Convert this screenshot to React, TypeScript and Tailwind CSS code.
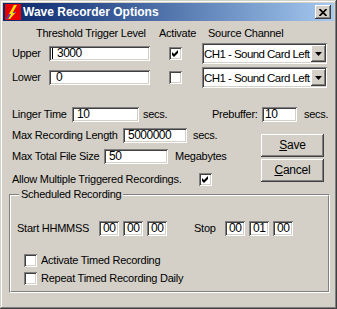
import React from "react";

const SUNKEN =
  "shadow-[inset_1px_1px_0_#808080,inset_-1px_-1px_0_#ffffff,inset_2px_2px_0_#404040,inset_-2px_-2px_0_#d4d0c8]";
const RAISED =
  "shadow-[inset_-1px_-1px_0_#404040,inset_1px_1px_0_#ffffff,inset_-2px_-2px_0_#808080,inset_2px_2px_0_#d4d0c8]";

function CheckBox({ checked }: { checked?: boolean }) {
  return (
    <div className={"w-[13px] h-[13px] shrink-0 bg-white flex items-center justify-center " + SUNKEN}>
      {checked && (
        <svg width="7" height="7" viewBox="0 0 7 7">
          <path d="M0 2 L2 4 L6 0 L6 3 L2 7 L0 5 Z" fill="#000" />
        </svg>
      )}
    </div>
  );
}

function TextBox({ value, w, pad, caret }: { value: string; w: string; pad?: string; caret?: boolean }) {
  return (
    <div
      className={
        "h-[15px] shrink-0 bg-white flex items-center text-[12px] tracking-[-0.5px] leading-[13px] overflow-hidden whitespace-nowrap " +
        w +
        " " +
        (pad ?? "pl-[5px]") +
        " " +
        SUNKEN
      }
    >
      {caret && <span className="w-[1px] h-[11px] bg-black mr-[4px] -ml-[2px] shrink-0" />}
      {value}
    </div>
  );
}

function Select({ text }: { text: string }) {
  return (
    <div className={"w-[125px] h-[21px] shrink-0 bg-white flex items-center pl-[2px] pr-[1px] " + SUNKEN}>
      <span className="flex-1 overflow-hidden whitespace-nowrap text-[11.5px] tracking-[-0.55px] leading-[14px]">
        {text}
      </span>
      <div className={"w-[15px] h-[17px] shrink-0 bg-[#d4d0c8] flex items-center justify-center " + RAISED}>
        <svg width="7" height="4" viewBox="0 0 7 4">
          <path d="M0 0 H7 L3.5 4 Z" fill="#000" />
        </svg>
      </div>
    </div>
  );
}

function Button({ children }: { children: React.ReactNode }) {
  return (
    <div
      className={
        "w-[63px] h-[23px] bg-[#d4d0c8] flex items-center justify-center text-[12px] tracking-[-0.2px] " + RAISED
      }
    >
      {children}
    </div>
  );
}

export default function App() {
  return (
    <div
      className={
        "w-[337px] h-[309px] bg-[#d4d0c8] p-[3px] flex flex-col font-['Liberation_Sans',Arial,sans-serif] text-[11px] tracking-[-0.25px] leading-[13px] text-black shadow-[inset_-1px_-1px_0_#404040,inset_1px_1px_0_#d4d0c8,inset_-2px_-2px_0_#808080,inset_2px_2px_0_#ffffff]"
      }
    >
      {/* Title bar */}
      <div className="h-[18px] shrink-0 flex items-center bg-linear-to-r from-[#0a246a] to-[#a6caf0] pl-[2px] pr-[3px]">
        <svg width="16" height="16" viewBox="0 0 16 16" className="shrink-0">
          <rect width="16" height="16" fill="#e80000" />
          <path d="M9 1 L12 1 L8 8 L11 8 L5 15 L3 15 L6 10 L4 10 Z" fill="#ffe400" />
          <path d="M4 10 L6 10 L3 15 L1 15 Z" fill="#5a3cc8" />
          <path d="M8 8 L11 8 L10 9 L7.5 9 Z" fill="#5a3cc8" />
        </svg>
        <span className="ml-[2px] text-white font-bold text-[12px] tracking-[0px] leading-[14px] whitespace-nowrap">
          Wave Recorder Options
        </span>
        <div className={"ml-auto w-[16px] h-[14px] bg-[#d4d0c8] flex items-center justify-center " + RAISED}>
          <svg width="8" height="7" viewBox="0 0 8 7">
            <path d="M0.5 0 L7.5 7 M7.5 0 L0.5 7" stroke="#000" strokeWidth="1.7" />
          </svg>
        </div>
      </div>

      {/* Header row */}
      <div className="h-[22px] pt-[2px] flex items-center whitespace-nowrap">
        <span className="ml-[33px] w-[123px]">Threshold Trigger Level</span>
        <span className="w-[49px]">Activate</span>
        <span>Source Channel</span>
      </div>

      {/* Upper */}
      <div className="h-[21px] flex items-center">
        <span className="ml-[9px] w-[37px]">Upper</span>
        <TextBox value="3000" w="w-[101px]" pad="pl-[5px]" caret />
        <div className="ml-[19px]">
          <CheckBox checked />
        </div>
        <div className="ml-[20px]">
          <Select text="CH1 - Sound Card Left" />
        </div>
      </div>

      {/* Lower */}
      <div className="mt-[3px] h-[21px] flex items-center">
        <span className="ml-[9px] w-[37px]">Lower</span>
        <TextBox value="0" w="w-[101px]" pad="pl-[7px]" />
        <div className="ml-[19px]">
          <CheckBox />
        </div>
        <div className="ml-[20px]">
          <Select text="CH1 - Sound Card Left" />
        </div>
      </div>

      {/* Linger */}
      <div className="mt-[19px] h-[15px] flex items-center whitespace-nowrap">
        <span className="ml-[9px] w-[60px]">Linger Time</span>
        <TextBox value="10" w="w-[67px]" />
        <span className="ml-[4px] w-[69px]">secs.</span>
        <span className="w-[50px]">Prebuffer:</span>
        <TextBox value="10" w="w-[35px]" pad="pl-[3px]" />
        <span className="ml-[7px]">secs.</span>
      </div>

      {/* Middle block */}
      <div className="flex">
        <div className="w-[258px] flex flex-col whitespace-nowrap">
          <div className="mt-[6px] h-[15px] flex items-center">
            <span className="ml-[9px] w-[111px]">Max Recording Length</span>
            <TextBox value="5000000" w="w-[64px]" />
            <span className="ml-[6px]">secs.</span>
          </div>
          <div className="mt-[6px] h-[15px] flex items-center">
            <span className="ml-[9px] w-[92px]">Max Total File Size</span>
            <TextBox value="50" w="w-[64px]" />
            <span className="ml-[7px]">Megabytes</span>
          </div>
          <div className="mt-[9px] h-[13px] flex items-center">
            <span className="ml-[9px] w-[187px]">Allow Multiple Triggered Recordings.</span>
            <CheckBox checked />
          </div>
        </div>
        <div className="flex flex-col">
          <div className="mt-[12px]">
            <Button>
              <span>
                <span className="underline">S</span>ave
              </span>
            </Button>
          </div>
          <div className="mt-[2px]">
            <Button>
              <span>
                <span className="underline">C</span>ancel
              </span>
            </Button>
          </div>
        </div>
      </div>

      {/* Group box */}
      <div className="mt-[8px] ml-[6px] w-[321px] h-[99px] border border-t-[#808080] border-l-[#808080] border-r-white border-b-white">
        <div className="h-full border border-t-white border-l-white border-r-[#808080] border-b-[#808080] flex flex-col whitespace-nowrap">
          <span className="-mt-[8px] ml-[8px] px-[2px] self-start bg-[#d4d0c8]">Scheduled Recording</span>
          <div className="mt-[20px] h-[15px] flex items-center">
            <span className="ml-[6px] w-[82px]">Start HHMMSS</span>
            <TextBox value="00" w="w-[20px]" pad="pl-[4px]" />
            <div className="ml-[4px]">
              <TextBox value="00" w="w-[20px]" pad="pl-[4px]" />
            </div>
            <div className="ml-[4px]">
              <TextBox value="00" w="w-[20px]" pad="pl-[4px]" />
            </div>
            <span className="ml-[27px] w-[31px]">Stop</span>
            <TextBox value="00" w="w-[20px]" pad="pl-[4px]" />
            <div className="ml-[4px]">
              <TextBox value="01" w="w-[20px]" pad="pl-[4px]" />
            </div>
            <div className="ml-[4px]">
              <TextBox value="00" w="w-[20px]" pad="pl-[4px]" />
            </div>
          </div>
          <div className="mt-[18px] h-[13px] flex items-center">
            <div className="ml-[13px]">
              <CheckBox />
            </div>
            <span className="ml-[4px]">Activate Timed Recording</span>
          </div>
          <div className="mt-[5px] h-[13px] flex items-center">
            <div className="ml-[13px]">
              <CheckBox />
            </div>
            <span className="ml-[4px]">Repeat Timed Recording Daily</span>
          </div>
        </div>
      </div>
    </div>
  );
}
